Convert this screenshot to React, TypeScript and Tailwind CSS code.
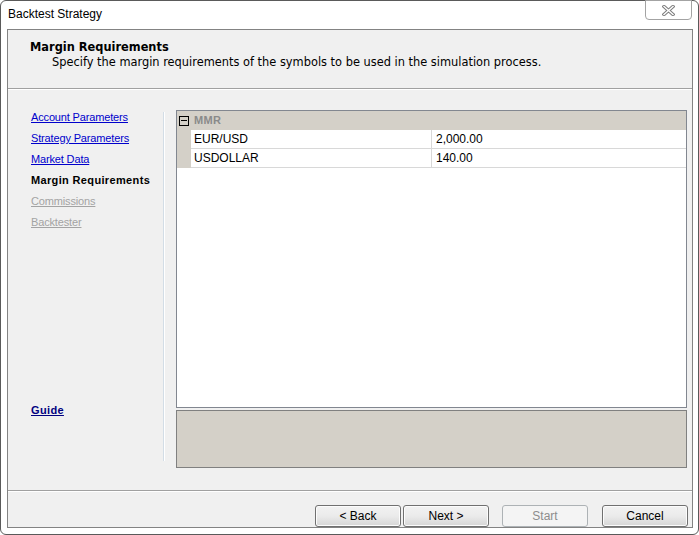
import React from "react";

const font = { fontFamily: '"Liberation Sans", Arial, sans-serif' };
const dejavu = { fontFamily: '"DejaVu Sans", Verdana, sans-serif' };

function Btn({ label, disabled }: { label: string; disabled?: boolean }) {
  return (
    <div
      className={
        disabled
          ? "w-[86px] h-[22px] rounded-[3px] border border-[#adb2b5] bg-[#f4f4f4] flex items-center justify-center text-[12px] text-[#8d8d8d]"
          : "w-[86px] h-[22px] rounded-[3px] border border-[#707070] bg-gradient-to-b from-[#f2f2f2] via-[#ebebeb] to-[#d6d6d6] flex items-center justify-center text-[12px] text-black shadow-[inset_0_0_0_1px_#fcfcfc]"
      }
    >
      {label}
    </div>
  );
}

export default function App() {
  return (
    <div style={font} className="w-[699px] h-[535px] bg-white">
      <div className="w-[699px] h-[535px] border border-[#5a5a5a] rounded-[6px] bg-white flex flex-col relative">
        {/* close button */}
        <div className="absolute left-[644px] top-[-1px] w-[47px] h-[20px] border border-[#a3a3a3] rounded-b-[4px] bg-white flex items-center justify-center">
          <svg width="13" height="11" viewBox="0 0 13 11">
            <path d="M2 1.5 L11 9.5 M11 1.5 L2 9.5" stroke="#7d7d7d" strokeWidth="3.4" strokeLinecap="square" />
            <path d="M2 1.5 L11 9.5 M11 1.5 L2 9.5" stroke="#ffffff" strokeWidth="1.4" strokeLinecap="square" />
          </svg>
        </div>
        {/* title bar */}
        <div className="h-[28px] flex items-start pl-[7px] pt-[6px] text-[12px] leading-[15px] text-black">
          Backtest Strategy
        </div>
        {/* inner frame */}
        <div className="ml-[6px] mr-[5px] h-[499px] border border-[#838383] bg-[#f0f0f0] flex flex-col">
          {/* header */}
          <div style={dejavu} className="h-[59px] border-b border-[#a0a0a0] pt-[11px] pl-[22px] text-[11.4px] leading-[13px]">
            <div className="font-bold text-black">Margin Requirements</div>
            <div className="mt-[2px] pl-[22px] text-black">
              Specify the margin requirements of the symbols to be used in the simulation process.
            </div>
          </div>
          {/* body */}
          <div className="h-[401px] flex border-t border-white">
            <div className="w-[155px] flex flex-col pl-[23px] pt-[21px] text-[11px] leading-[13px]">
              <div className="flex flex-col gap-[8px]">
                <span className="text-[#0000cc] underline tracking-[-0.15px]">Account Parameters</span>
                <span className="text-[#0000cc] underline tracking-[-0.15px]">Strategy Parameters</span>
                <span className="text-[#0000cc] underline tracking-[-0.15px]">Market Data</span>
                <span className="font-bold text-black tracking-[0.35px]">Margin Requirements</span>
                <span className="text-[#a3a3a3] underline tracking-[-0.15px]">Commissions</span>
                <span className="text-[#a3a3a3] underline tracking-[-0.15px]">Backtester</span>
              </div>
              <span className="mt-[175px] font-bold text-[#000080] underline tracking-[0.35px]">Guide</span>
            </div>
            <div className="mt-[22px] h-[349px] w-[2px] flex">
              <div className="w-[1px] bg-[#d3dde6]" />
              <div className="w-[1px] bg-white" />
            </div>
            <div className="ml-[11px] mt-[20px] w-[511px] flex flex-col">
              <div className="h-[298px] border border-[#828790] bg-white flex flex-col text-[12px]">
                <div className="h-[19px] bg-[#d4d0c8] flex items-center">
                  <div className="ml-[2px] w-[10px] h-[10px] border border-black flex items-center justify-center">
                    <div className="w-[6px] h-[1px] bg-black" />
                  </div>
                  <span className="ml-[5px] font-bold text-[#8a8a8a] text-[11px] tracking-[0.3px]">MMR</span>
                </div>
                {[
                  ["EUR/USD", "2,000.00"],
                  ["USDOLLAR", "140.00"],
                ].map(([a, b]) => (
                  <div key={a} className="h-[19px] flex">
                    <div className="w-[14px] bg-[#d4d0c8]" />
                    <div className="w-[241px] border-b border-r border-[#d8d8d8] pl-[3px] flex items-center text-black">{a}</div>
                    <div className="flex-1 border-b border-[#d8d8d8] pl-[4px] flex items-center text-black">{b}</div>
                  </div>
                ))}
              </div>
              <div className="mt-[2px] h-[58px] border border-[#808080] bg-[#d4d0c8]" />
            </div>
          </div>
          {/* footer */}
          <div className="flex-1 border-t border-[#a0a0a0] flex flex-col">
            <div className="h-[1px] bg-white" />
            <div className="mt-[13px] flex pr-[4px] justify-end">
              <Btn label="< Back" />
              <div className="ml-[2px]"><Btn label="Next >" /></div>
              <div className="ml-[13px]"><Btn label="Start" disabled /></div>
              <div className="ml-[14px]"><Btn label="Cancel" /></div>
            </div>
          </div>
        </div>
      </div>
    </div>
  );
}
